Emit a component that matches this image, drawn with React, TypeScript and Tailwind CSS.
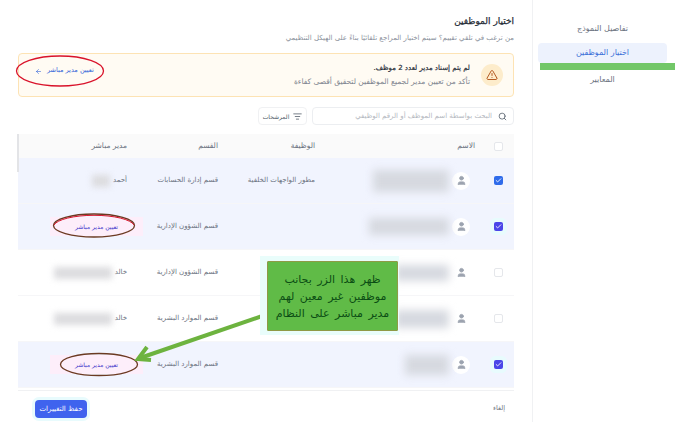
import React from 'react';
import { ArrowLeft, ListFilter, Search, TriangleAlert, User, Check } from 'lucide-react';

interface Row {
  checked: boolean;
  indigo?: boolean;
  blurW: number;
  blurH: number;
  job?: string;
  dept: string;
  manager?: string;
  managerBlurW?: number;
  assign?: boolean;
}

const rows: Row[] = [
  { checked: true, blurW: 76, blurH: 22, job: 'مطور الواجهات الخلفية', dept: 'قسم إدارة الحسابات', manager: 'أحمد', managerBlurW: 18 },
  { checked: true, indigo: true, blurW: 80, blurH: 17, dept: 'قسم الشؤون الإدارية', assign: true },
  { checked: false, blurW: 54, blurH: 16, dept: 'قسم الشؤون الإدارية', manager: 'خالد', managerBlurW: 58 },
  { checked: false, blurW: 54, blurH: 18, dept: 'قسم الموارد البشرية', manager: 'خالد', managerBlurW: 58 },
  { checked: true, indigo: true, blurW: 44, blurH: 20, dept: 'قسم الموارد البشرية', assign: true },
];

const font = { fontFamily: '"DejaVu Sans", sans-serif' };

function Checkbox({ checked, indigo }: { checked: boolean; indigo?: boolean }) {
  if (checked) {
    return (
      <div className={`flex h-[9px] w-[9px] items-center justify-center rounded-[2px] ${indigo ? 'bg-[#4a46e8] shadow-[0_0_0_4px_#e8fbfd]' : 'bg-[#2f6bea]'}`}>
        <Check size={7} strokeWidth={3} className="text-white" />
      </div>
    );
  }
  return <div className="h-[9px] w-[9px] rounded-[2px] border border-gray-200 bg-white" />;
}

function TableRow({ row }: { row: Row }) {
  return (
    <div className={`grid h-[46px] grid-cols-[39px_160px_97px_91px_110px] items-center border-b border-[#f6f6f8] text-[7px] text-[#6b7280] ${row.checked ? 'bg-[#f1f4fe]' : 'bg-white'}`}>
      <div className="flex pr-[11px]">
        <Checkbox checked={row.checked} indigo={row.indigo} />
      </div>
      <div className="flex items-center gap-[3px] pr-[5px]">
        <div className={`flex h-[18px] w-[18px] shrink-0 items-center justify-center rounded-full ${row.checked ? 'bg-white' : ''}`}>
          <User size={11} fill="#9ca3af" className="text-[#9ca3af]" />
        </div>
        <div className="bg-[#d6d9e0] blur-[4px]" style={{ width: row.blurW, height: row.blurH }} />
      </div>
      <div>{row.job}</div>
      <div>{row.dept}</div>
      <div className="flex items-center gap-[3px]">
        {row.manager && <span>{row.manager}</span>}
        {row.managerBlurW && <div className="h-[12px] bg-[#dcdcdf] blur-[3px]" style={{ width: row.managerBlurW }} />}
        {row.assign && (
          <span className="-mr-[16px] w-[93px] bg-[#fdeefa] py-[5px] text-center text-[6px] text-[#4338ca]">تعيين مدير مباشر</span>
        )}
      </div>
    </div>
  );
}

export default function App() {
  return (
    <div dir="rtl" style={font} className="relative flex h-[422px] w-[688px] overflow-hidden bg-white">
      <aside className="w-[156px] shrink-0 border-l border-[#f0f1f3] pt-[16px] pr-[21px] pl-[5px] text-[8px]">
        <div className="flex h-[25px] items-center justify-center text-[#6b7280]">تفاصيل النموذج</div>
        <div className="mt-[2px] flex h-[20px] items-center justify-center rounded-[4px] bg-[#edf2fd] text-[#3b6fd8]">اختيار الموظفين</div>
        <div className="mt-[10px] flex h-[13px] items-center justify-center text-[#6b7280]">المعايير</div>
      </aside>

      <main className="flex min-w-0 flex-1 flex-col px-[18px] pt-[14px]">
        <h1 className="text-[9px] leading-[14px] text-[#262c36] [-webkit-text-stroke:0.25px_#262c36]">اختيار الموظفين</h1>
        <p className="mt-[3px] text-[7px] leading-[14px] text-[#8b919c]">
          من ترغب في تلقي تقييم؟ سيتم اختيار المراجع تلقائيًا بناءً على الهيكل التنظيمي
        </p>

        <div className="mt-[8px] flex h-[44px] items-center gap-[11px] rounded-[4px] border border-[#fde3b4] bg-[#fffbf3] pr-[10px] pl-[16px]">
          <div className="flex h-[22px] w-[22px] shrink-0 items-center justify-center rounded-full bg-[#fdeccb]">
            <TriangleAlert size={12} className="text-[#b45b22]" />
          </div>
          <div className="flex-1">
            <div className="text-[7px] leading-[12px] text-[#262c36] [-webkit-text-stroke:0.2px_#262c36]">لم يتم إسناد مدير لعدد 2 موظف.</div>
            <div className="mt-[2px] text-[7.5px] leading-[12px] text-[#7d838e]">تأكد من تعيين مدير لجميع الموظفين لتحقيق أقصى كفاءة</div>
          </div>
          <div className="-mt-[8px] flex items-center gap-[5px] text-[6.5px] text-[#2f62d8]">
            <span>تعيين مدير مباشر</span>
            <ArrowLeft size={7} />
          </div>
        </div>

        <div className="mt-[10px] flex items-center gap-[5px]">
          <div className="flex h-[18px] w-[202px] items-center gap-[6px] rounded-[4px] border border-[#eceef1] px-[6px] text-[7px] text-[#b4b8c0]">
            <Search size={9} className="text-[#4b5563]" />
            <span>البحث بواسطة اسم الموظف أو الرقم الوظيفي</span>
          </div>
          <div className="flex h-[18px] w-[49px] items-center justify-center gap-[4px] rounded-[4px] border border-[#f0f1f3] text-[6px] text-[#4b5563]">
            <ListFilter size={9} />
            <span>المرشحات</span>
          </div>
        </div>

        <div className="mt-[9px] grid h-[24px] grid-cols-[39px_160px_97px_91px_110px] items-center bg-[#fafafa] text-[7.5px] text-[#6b7280]">
          <div className="flex pr-[11px]">
            <Checkbox checked={false} />
          </div>
          <div>الاسم</div>
          <div>الوظيفة</div>
          <div>القسم</div>
          <div>مدير مباشر</div>
        </div>

        {rows.map((row, i) => (
          <TableRow key={i} row={row} />
        ))}

        <div className="mt-[2px] flex flex-1 items-start justify-between border-t border-[#f0f1f3] pt-[9px]">
          <span className="mt-[4px] mr-[9px] text-[6.5px] text-[#6b7280]">إلغاء</span>
          <button className="ml-[17px] flex h-[18px] w-[52px] items-center justify-center rounded-[4px] bg-[#3f63ee] text-[7px] text-white shadow-[0_0_0_3px_#e8fbfd]">
            حفظ التغييرات
          </button>
        </div>
      </main>

      {/* scrollbar thumb */}
      <div className="absolute top-[134px] left-[17px] h-[38px] w-[2px] bg-[#e3e4e7]" />

      {/* annotations drawn over the screenshot */}
      <div className="absolute top-[63px] left-[540px] h-[7px] w-[135px] bg-[#72c768]" />

      <svg className="pointer-events-none absolute top-0 left-0" width="688" height="422">
        <ellipse cx="60" cy="71" rx="43.5" ry="15" fill="none" stroke="#d9122a" strokeWidth="1.3" />
        <ellipse cx="94" cy="225.5" rx="40.5" ry="11.5" fill="none" stroke="#6b3a22" strokeWidth="1.3" />
        <path d="M54 225 A40.5 11.5 0 0 1 134 225" fill="none" stroke="#d9122a" strokeWidth="1" />
        <ellipse cx="99" cy="364.5" rx="38.5" ry="11" fill="none" stroke="#6b3a22" strokeWidth="1.3" />
        <path d="M268 314 L140 358" stroke="#6db33f" strokeWidth="4" />
        <path d="M147 347 L138 359 L151 360" fill="none" stroke="#6db33f" strokeWidth="4" />
      </svg>

      <div className="absolute top-[256px] left-[260px] h-[79px] w-[139px] bg-[#e9fdfb]" />
      <div
        className="absolute top-[261px] left-[267px] flex h-[70px] w-[131px] items-center justify-center rounded-[1px] border border-[#8f9a46] bg-[#60bb47] text-center text-[11px] leading-[17px] whitespace-nowrap text-[#0b4d14] [word-spacing:2px]"
      >
        <div>
          ظهر هذا الزر بجانب
          <br />
          موظفين غير معين لهم
          <br />
          مدير مباشر على النظام
        </div>
      </div>
    </div>
  );
}
